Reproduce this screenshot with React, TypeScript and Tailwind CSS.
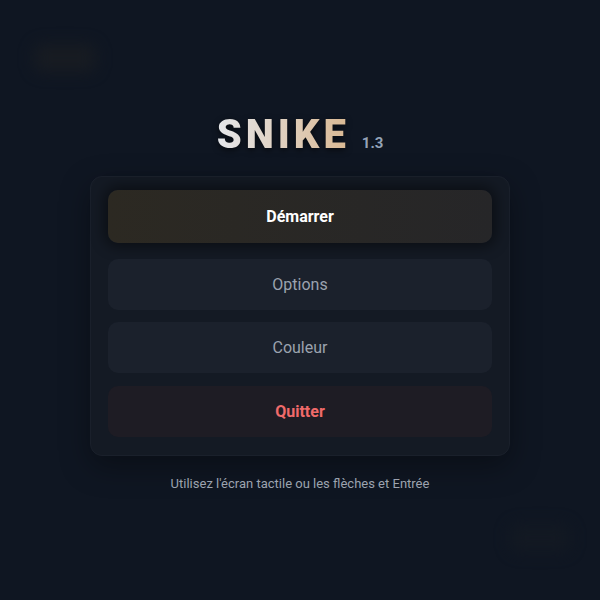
import React from "react";

const FONT = { fontFamily: "Roboto, 'Noto Sans', sans-serif" };

export default function App() {
  return (
    <div
      className="relative w-full h-[600px] overflow-hidden bg-[#0f1622] flex flex-col items-center"
      style={FONT}
    >
      {/* soft blurred blobs */}
      <div className="absolute left-[34px] top-[44px] w-[62px] h-[28px] rounded-lg bg-[#1a1d22] blur-sm opacity-80" />
      <div className="absolute left-[510px] top-[524px] w-[60px] h-[28px] rounded-lg bg-[#141a23] blur-sm opacity-80" />

      {/* title */}
      <div className="mt-[109px] flex items-end gap-[12px] h-[46px]">
        <h1 className="text-[40px] leading-none font-black tracking-[0.1em] bg-gradient-to-r from-[#e5e7eb] to-[#d9b892] bg-clip-text text-transparent drop-shadow-[0_2px_3px_rgba(0,0,0,0.6)]">
          SNIKE
        </h1>
        <span className="text-[15px] leading-none font-bold text-[#94a3b8] mb-[4px]">1.3</span>
      </div>

      {/* menu panel */}
      <div className="mt-[21px] w-[420px] rounded-[12px] bg-[#141a24] border border-[#1a202b] px-[17px] pt-[13px] pb-[18px] shadow-[0_10px_30px_rgba(0,0,0,0.35)] flex flex-col">
        <button className="h-[53px] rounded-[10px] bg-gradient-to-r from-[#2c2922] to-[#262628] text-white font-bold text-[16px] shadow-[0_0_14px_4px_rgba(0,0,0,0.45)]">
          Démarrer
        </button>
        <button className="mt-[16px] h-[51px] rounded-[10px] bg-[#1b212c] text-[#9ca3af] text-[16px]">
          Options
        </button>
        <button className="mt-[12px] h-[51px] rounded-[10px] bg-[#1b212c] text-[#9ca3af] text-[16px]">
          Couleur
        </button>
        <button className="mt-[13px] h-[51px] rounded-[10px] bg-[#1e1c24] text-[#f06a6a] font-bold text-[16px]">
          Quitter
        </button>
      </div>

      <p className="mt-[18px] text-[13px] text-[#9ca3af]">
        Utilisez l'écran tactile ou les flèches et Entrée
      </p>
    </div>
  );
}
